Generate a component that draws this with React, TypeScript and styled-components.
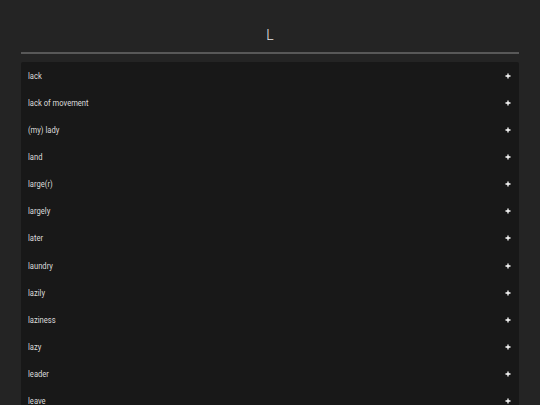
import styled, { createGlobalStyle } from 'styled-components'

const words = [
	'lack',
	'lack of movement',
	'(my) lady',
	'land',
	'large(r)',
	'largely',
	'later',
	'laundry',
	'lazily',
	'laziness',
	'lazy',
	'leader',
	'leave',
	'leave (behind)',
	'left',
]

const GlobalStyle = createGlobalStyle`
	html, body {
		margin: 0;
		padding: 0;
		background: #242424;
		font-family: Roboto, "Liberation Sans", sans-serif;
	}
`

export default function App() {
	return (
		<>
			<GlobalStyle />
			<Page>
				<Letter>L</Letter>
				<Divider />
				<WordList>
					{words.map((word) => (
						<WordRow key={word}>
							<WordText>{word}</WordText>
							<PlusIcon viewBox='0 0 6 6' width='6' height='6'>
								<path d='M3 0.5V5.5M0.5 3H5.5' stroke='#fff' strokeWidth='1.3' />
							</PlusIcon>
						</WordRow>
					))}
				</WordList>
			</Page>
		</>
	)
}

const Page = styled.div`
	height: 405px;
	overflow: hidden;
	padding: 0 21px 0 21px;
`
const Letter = styled.h1`
	margin: 0;
	padding-top: 26px;
	height: 26px;
	font-size: 14px;
	font-weight: 300;
	line-height: 18px;
	color: #e8e8e8;
	text-align: center;
`
const Divider = styled.div`
	height: 2px;
	background: #585858;
	margin-bottom: 8px;
`
const WordList = styled.ul`
	list-style: none;
	margin: 0;
	padding: 0;
	background: #181818;
	border-radius: 2px;
`
const WordRow = styled.li`
	height: 27.15px;
	padding: 0 7px;
	display: flex;
	align-items: center;
	justify-content: space-between;
`
const WordText = styled.span`
	display: inline-block;
	font-size: 9.5px;
	color: #dcdcdc;
	transform: scaleX(0.8);
	transform-origin: left center;
	white-space: nowrap;
	margin-top: -1px;
`
const PlusIcon = styled.svg`
	display: block;
	margin-right: 1px;
`
